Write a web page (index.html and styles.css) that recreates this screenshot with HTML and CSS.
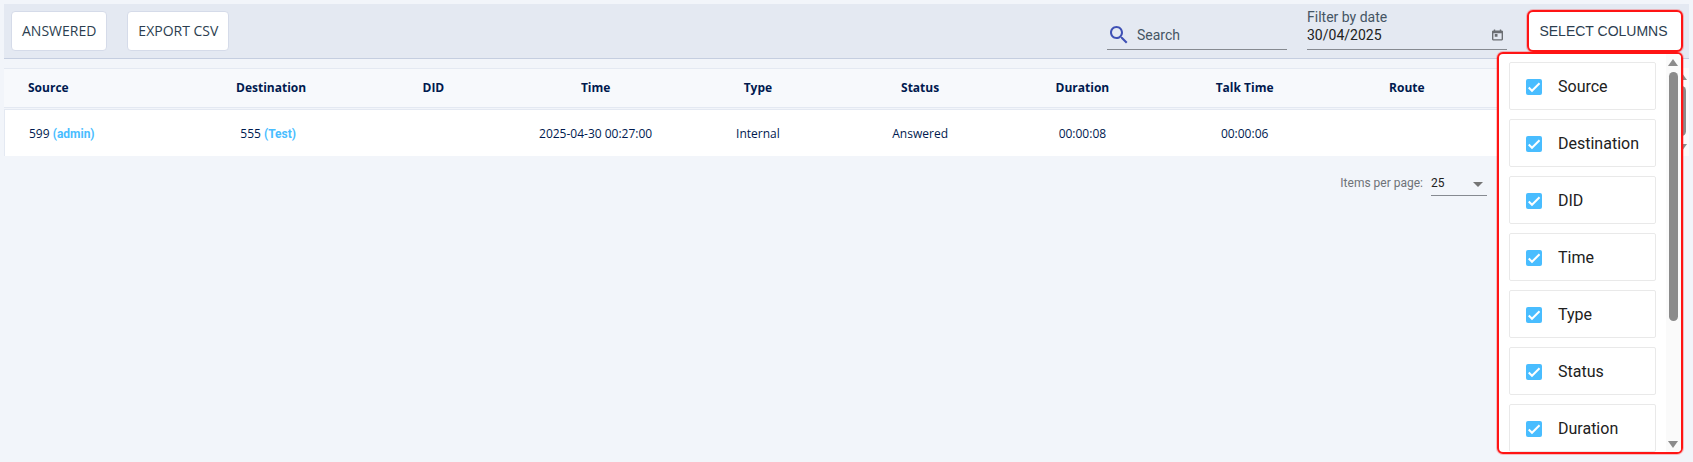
FILE: index.html
```html
<!DOCTYPE html>
<html lang="en">
<head>
  <meta charset="UTF-8">
  <meta name="viewport" content="width=device-width, initial-scale=1.0">
  <title>Call History</title>
  <link rel="stylesheet" href="styles.css">
</head>
<body>
  <div class="toolbar">
    <button class="btn" type="button">ANSWERED</button>
    <button class="btn" type="button">EXPORT CSV</button>

    <div class="filters">
      <div class="search-field">
        <svg class="search-icon" viewBox="3 3 18 18"><path d="M15.5 14h-.79l-.28-.27C15.41 12.59 16 11.11 16 9.5 16 5.91 13.09 3 9.5 3S3 5.91 3 9.5 5.91 16 9.5 16c1.61 0 3.09-.59 4.23-1.57l.27.28v.79l5 4.99L20.49 19l-4.99-5zm-6 0C7.01 14 5 11.99 5 9.5S7.01 5 9.5 5 14 7.01 14 9.5 11.99 14 9.5 14z"/></svg>
        <input type="text" placeholder="Search" aria-label="Search">
      </div>
      <div class="date-field">
        <label for="date">Filter by date</label>
        <div class="date-row">
          <input type="text" id="date" value="30/04/2025">
          <button class="calendar" type="button" aria-label="Open calendar">
            <svg viewBox="0 0 12 12"><path fill-rule="evenodd" d="M2 0h1.500v1h5V0H10v1h1l1 1v9l-1 1H1l-1-1V2l1-1h1zM1.500 4v6.500h9V4zM3 5h3v3H3z"/></svg>
          </button>
        </div>
      </div>
      <div class="columns-menu">
        <button class="columns-btn" type="button">SELECT COLUMNS</button>
        <div class="columns-panel">
          <div class="columns-list">
            <label class="option"><input type="checkbox" checked>Source</label>
            <label class="option"><input type="checkbox" checked>Destination</label>
            <label class="option"><input type="checkbox" checked>DID</label>
            <label class="option"><input type="checkbox" checked>Time</label>
            <label class="option"><input type="checkbox" checked>Type</label>
            <label class="option"><input type="checkbox" checked>Status</label>
            <label class="option"><input type="checkbox" checked>Duration</label>
          </div>
          <div class="scrollbar">
            <span class="arrow-up"></span>
            <span class="thumb"></span>
            <span class="arrow-down"></span>
          </div>
        </div>
      </div>
    </div>
  </div>

  <div class="table-wrap">
    <table>
      <thead>
        <tr>
          <th class="first">Source</th>
          <th>Destination</th>
          <th>DID</th>
          <th>Time</th>
          <th>Type</th>
          <th>Status</th>
          <th>Duration</th>
          <th>Talk Time</th>
          <th>Route</th>
          <th class="last"></th>
        </tr>
      </thead>
      <tbody>
        <tr>
          <td class="first">599 <a href="#">(admin)</a></td>
          <td class="destination">555 <a href="#">(Test)</a></td>
          <td></td>
          <td>2025-04-30 00:27:00</td>
          <td>Internal</td>
          <td>Answered</td>
          <td>00:00:08</td>
          <td>00:00:06</td>
          <td></td>
          <td class="last"></td>
        </tr>
      </tbody>
    </table>
    <div class="scrollbar">
      <span class="arrow-up"></span>
      <span class="thumb"></span>
      <span class="arrow-down"></span>
    </div>
  </div>

  <div class="paginator">
    <label for="pageSize">Items per page:</label>
    <select id="pageSize">
      <option>25</option>
      <option>50</option>
      <option>100</option>
    </select>
  </div>
</body>
</html>
```
FILE: styles.css
```css
* {
  box-sizing: border-box;
}
body {
  margin: 0;
  padding: 4px;
  min-height: 100vh;
  background-color: #f2f5fa;
  font-family: Roboto, sans-serif;
  font-size: 14px;
  color: #212121;
}
button, input, select {
  font-family: inherit;
  font-size: inherit;
  color: inherit;
}
.toolbar {
  display: flex;
  align-items: flex-start;
  gap: 20px;
  height: 55px;
  padding: 6px 6px 6px 7px;
  background-color: #e4e9f2;
  border-bottom: 1px solid #c5cee0;
}
.btn {
  height: 40px;
  margin-top: 1px;
  padding: 0 10px 2px;
  background-color: #fff;
  border: 1px solid #d5dbe9;
  border-radius: 4px;
  font-family: "Open Sans", sans-serif;
  color: #2c3e50;
  cursor: pointer;
}
.filters {
  display: flex;
  gap: 20px;
  margin-left: auto;
}
.search-field {
  display: flex;
  align-items: center;
  width: 180px;
  height: 26px;
  margin-top: 14px;
  padding: 0 0 3px 3px;
  border-bottom: 1px solid #868a91;
}
.search-icon {
  width: 18px;
  height: 18px;
  margin-right: 9px;
  fill: #3f51b5;
}
.search-field input,
.date-row input {
  flex: 1;
  min-width: 0;
  padding: 0;
  border: none;
  outline: none;
  background: none;
}
.search-field input::placeholder {
  color: #455564;
  opacity: 1;
}
.date-field {
  width: 200px;
  height: 40px;
  border-bottom: 1px solid #868a91;
}
.date-field label {
  display: block;
  line-height: 14px;
  color: #455564;
}
.date-row {
  display: flex;
  align-items: center;
  height: 22px;
}
.calendar {
  padding: 0 4px;
  border: none;
  background: none;
}
.calendar svg {
  display: block;
  width: 11px;
  height: 12px;
  fill: #6b6e73;
}
.columns-menu {
  position: relative;
}
.columns-btn {
  width: 156px;
  height: 42px;
  padding: 0 3px 0 0;
  background-color: #fff;
  border: 2px solid #ff1414;
  border-radius: 6px;
  box-shadow: 0 0 0 1px #ff141440;
  font-family: "Liberation Sans", Arial, sans-serif;
  color: #2c3e50;
}
.columns-panel {
  position: absolute;
  z-index: 10;
  top: 42px;
  right: 0;
  display: flex;
  width: 186px;
  height: calc(100vh - 60px);
  background-color: #fff;
  border: 2px solid #ff1414;
  border-radius: 6px;
  box-shadow: 0 0 0 1px #ff141440;
  overflow: hidden;
}
.columns-list {
  flex: 1;
  padding: 8px 10px 0;
  overflow-y: auto;
  scrollbar-width: none;
}
.option {
  display: flex;
  align-items: center;
  height: 48px;
  margin-bottom: 9px;
  padding-left: 16px;
  border: 1px solid #e9e9e9;
  border-radius: 2px;
  font-size: 16px;
}
.option input {
  appearance: none;
  width: 16px;
  height: 16px;
  margin: 2px 16px 0 0;
  border: 2px solid #757575;
  border-radius: 2px;
}
.option input:checked {
  border: none;
  background: #49bdff url("data:image/svg+xml,%3Csvg xmlns='http://www.w3.org/2000/svg' viewBox='0 0 24 24'%3E%3Cpath fill='none' stroke='%23fff' stroke-width='3' d='M4.1 12.7 9 17.6 20.3 6.3'/%3E%3C/svg%3E") center / 16px no-repeat;
}
.scrollbar {
  display: flex;
  flex-direction: column;
  flex-shrink: 0;
  align-items: center;
  width: 15px;
  padding: 5px 1px 4px 0;
  background-color: #fafafa;
}
.arrow-up, .arrow-down {
  border: 5px solid transparent;
}
.arrow-up {
  border-top: none;
  border-bottom: 7px solid #8b8b8b;
}
.arrow-down {
  margin-top: auto;
  border-bottom: none;
  border-top: 7px solid #8b8b8b;
}
.thumb {
  width: 9px;
  height: 64%;
  margin-top: 6px;
  border-radius: 5px;
  background-color: #8b8b8b;
}
.table-wrap {
  display: flex;
  margin-top: 8px;
}
.table-wrap .scrollbar {
  margin-top: 1px;
  padding: 5px 0;
}
table {
  width: 100%;
  table-layout: fixed;
  border-spacing: 0 1px;
  margin-bottom: -1px;
  font-family: "Open Sans", sans-serif;
  font-size: 12px;
  color: #001a4f;
}
th, td {
  padding: 0;
  text-align: center;
}
th {
  height: 40px;
  padding-bottom: 2px;
  background-color: #f7f9fc;
  border-top: 1px solid #e4e9f2;
  border-bottom: 1px solid #e4e9f2;
  font-weight: 700;
}
td {
  height: 47px;
  background-color: #fff;
  border-top: 1px solid #e4e9f2;
}
.first, .last {
  width: 186px;
}
.first {
  padding-left: 24px;
  text-align: left;
}
td.first {
  border-left: 1px solid #e4e9f2;
}
.destination {
  padding-right: 6px;
}
td a {
  font-family: Roboto, sans-serif;
  font-weight: 700;
  color: #49bdff;
  text-decoration: none;
}
.paginator {
  display: flex;
  justify-content: flex-end;
  align-items: center;
  gap: 8px;
  margin: 14px 202px 0 0;
  font-size: 12px;
  color: #6e7278;
}
.paginator select {
  appearance: none;
  width: 56px;
  height: 26px;
  padding: 0;
  border: none;
  border-bottom: 1px solid #868a91;
  border-radius: 0;
  background: url("data:image/svg+xml,%3Csvg xmlns='http://www.w3.org/2000/svg' viewBox='0 0 10 5'%3E%3Cpath fill='%23757575' d='M0 0h10L5 5z'/%3E%3C/svg%3E") right 4px top 12px / 10px 5px no-repeat;
  color: #212121;
}
```
